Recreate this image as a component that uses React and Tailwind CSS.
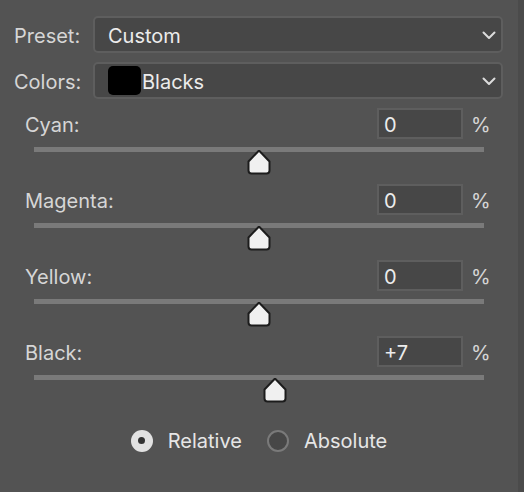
import React from "react";

const channels = [
    { name: "Cyan", value: 0 },
    { name: "Magenta", value: 0 },
    { name: "Yellow", value: 0 },
    { name: "Black", value: 7 },
];

function Chevron() {
    return (
        <svg width="14" height="9" viewBox="0 0 14 9" className="shrink-0 mt-[2px]">
            <polyline points="1.5,1.5 7,7 12.5,1.5" fill="none" stroke="#dcdcdc" strokeWidth="2" strokeLinecap="round" strokeLinejoin="round" />
        </svg>
    );
}

function Thumb() {
    return (
        <svg width="26" height="25" viewBox="0 0 26 25">
            <path
                d="M13 0.5 L23.5 11.5 L23.5 20.5 Q23.5 23.5 20.5 23.5 L5.5 23.5 Q2.5 23.5 2.5 20.5 L2.5 11.5 Z"
                fill="#f0f0f0"
                stroke="#1c1c1c"
                strokeWidth="2"
                strokeLinejoin="round"
            />
        </svg>
    );
}

function Dropdown({ children }) {
    return (
        <div className="flex-1 h-[37px] flex items-center justify-between rounded-[5px] border-2 border-[#5e5e5e] bg-[#474747] pl-[13px] pr-[5px]">
            <div className="flex items-center">{children}</div>
            <Chevron />
        </div>
    );
}

function Channel({ name, value }) {
    const text = value > 0 ? `+${value}` : `${value}`;
    const pct = (value + 100) / 200;
    return (
        <div className="h-[76px] flex flex-col">
            <div className="flex items-center h-[31px]">
                <div className="pl-[25px] w-[377px] pt-[3px] text-[20px] text-[#d6d6d6]">{name}:</div>
                <div className="w-[86px] h-[31px] border-2 border-[#5e5e5e] bg-[#474747] flex items-center pl-[5px] pt-[2px] text-[20px] text-[#ececec]">
                    {text}
                </div>
                <div className="pl-[8px] pt-[3px] text-[20px] text-[#d6d6d6]">%</div>
            </div>
            <div className="ml-[34px] mt-[8px] w-[450px] h-[5px] bg-[#7a7a7a] relative">
                <div className="absolute top-[3px] -translate-x-1/2" style={{ left: `${pct * 100}%` }}>
                    <Thumb />
                </div>
            </div>
        </div>
    );
}

export default function App() {
    return (
        <div
            className="w-[524px] h-[492px] bg-[#535353] flex"
            style={{ fontFamily: "Inter, 'Liberation Sans', sans-serif" }}
        >
            <div className="w-[518px] flex flex-col pt-[16px]">
                <div className="flex items-center pr-[15px]">
                    <div className="w-[93px] pl-[14px] pt-[2px] text-[20px] text-[#d6d6d6]">Preset:</div>
                    <Dropdown>
                        <span className="pt-[2px] text-[20px] text-[#ececec]">Custom</span>
                    </Dropdown>
                </div>
                <div className="flex items-center pr-[15px] mt-[9px]">
                    <div className="w-[93px] pl-[14px] pt-[2px] text-[20px] text-[#d6d6d6]">Colors:</div>
                    <Dropdown>
                        <div className="w-[33px] h-[29px] rounded-[5px] bg-black" />
                        <span className="pt-[2px] text-[20px] text-[#ececec] ml-[1px]">Blacks</span>
                    </Dropdown>
                </div>
                <div className="mt-[9px] flex flex-col">
                    {channels.map((c) => (
                        <Channel key={c.name} name={c.name} value={c.value} />
                    ))}
                </div>
                <div className="mt-[13px] flex items-center justify-center">
                    <div className="w-[22px] h-[22px] rounded-full bg-[#e2e2e2] flex items-center justify-center">
                        <div className="w-[7px] h-[7px] rounded-full bg-[#333333]" />
                    </div>
                    <span className="ml-[15px] pt-[1px] text-[20px] text-[#e6e6e6]">Relative</span>
                    <div className="ml-[25px] w-[22px] h-[22px] rounded-full border-2 border-[#7a7a7a] bg-[#474747]" />
                    <span className="ml-[15px] pt-[1px] text-[20px] text-[#e6e6e6]">Absolute</span>
                </div>
            </div>
            <div className="w-[6px] bg-[#4b4b4b]" />
        </div>
    );
}
